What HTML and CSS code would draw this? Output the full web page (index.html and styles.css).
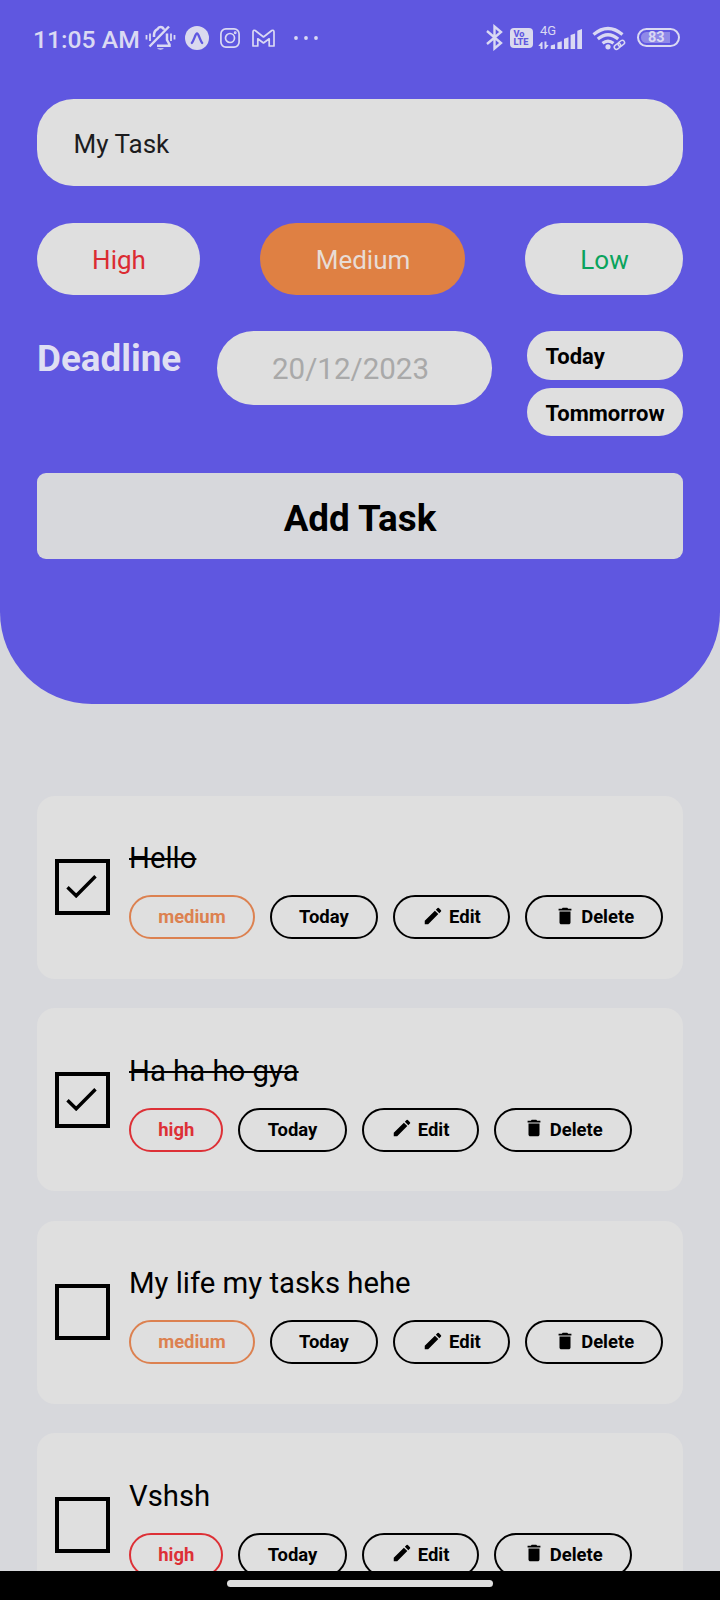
FILE: index.html
```html
<!DOCTYPE html>
<html lang="en">
<head>
<meta charset="utf-8">
<title>My Task</title>
<link rel="stylesheet" href="styles.css">
</head>
<body>
<svg class="sprite" aria-hidden="true">
  <symbol id="pencil" viewBox="0 0 24 24"><path d="M3 17.25V21h3.75L17.81 9.94l-3.75-3.75L3 17.25zM20.71 7.04a1 1 0 0 0 0-1.41l-2.34-2.34a1 1 0 0 0-1.41 0l-1.83 1.83 3.75 3.75 1.83-1.83z"/></symbol>
  <symbol id="trash" viewBox="0 0 24 24"><path d="M6 19c0 1.1.9 2 2 2h8c1.1 0 2-.9 2-2V7H6v12zM19 4h-3.5l-1-1h-5l-1 1H5v2h14V4z"/></symbol>
  <symbol id="check" viewBox="0 0 31 24"><path d="M1.5 13.2 10.2 21.8 29.5 2.3" fill="none" stroke="#000" stroke-width="3.4"/></symbol>
</svg>
<div class="screen">
  <header class="header">
    <div class="status">
      <span class="clock">11:05 AM</span>
      <svg class="i-bell" width="31" height="28" viewBox="0 0 31 28" fill="none" stroke="#dad9f3" stroke-width="2.5">
        <path d="M9 13v-2a6.500 6.500 0 0 1 3.500-5.800Q13.500 3 15.500 3Q18 3 19 5.600M22 9.500V16l2.500 4.500v1.200H12M4.500 22.500 24 2.500" />
        <path d="M12 24.300a4 2.700 0 0 0 7 0z" fill="#dad9f3" stroke="none"/>
        <path d="M5 9.500v7.500M1.500 11v4.500M26 9.500v7.500M29.500 11v4.500" stroke-width="1.800"/>
      </svg>
      <svg class="i-expo" width="24" height="24" viewBox="0 0 24 24"><circle cx="12" cy="12" r="12" fill="#dad9ee"/><path d="M6.800 17C9 14.500 10.300 7.500 12 7.500S15 14.500 17.200 17" fill="none" stroke="#5f57e0" stroke-width="2.300" stroke-linecap="round"/></svg>
      <svg class="i-insta" width="20" height="20" viewBox="0 0 20 20" fill="none" stroke="#dad9f3" stroke-width="1.700"><rect x=".9" y=".9" width="18.200" height="18.200" rx="5"/><circle cx="10" cy="10" r="4.500"/><circle cx="15.200" cy="4.800" r=".6"/></svg>
      <svg class="i-gmail" width="23" height="18" viewBox="0 0 23 18" fill="none" stroke="#dad9f3" stroke-width="1.700" stroke-linejoin="round"><path d="M1 17V3Q1 .6 3.200 1.500L11.500 8 19.800 1.500Q22 .6 22 3V17H17.200V9.800L11.500 14 5.800 9.800V17Z"/></svg>
      <svg class="i-dots" width="24" height="4" viewBox="0 0 24 4" fill="#dad9f3"><circle cx="2" cy="2" r="1.900"/><circle cx="12" cy="2" r="1.900"/><circle cx="22" cy="2" r="1.900"/></svg>

      <svg class="i-bt" width="17" height="27" viewBox="0 0 17 27" fill="none" stroke="#dad9f3" stroke-width="2.400"><path d="M1 7 15 19 8.500 24.500V2.500L15 8 1 20"/></svg>
      <span class="volte"><span>Vo</span><span>LTE</span></span>
      <span class="signal">
        <span class="net">4G</span>
        <svg width="46" height="23" viewBox="0 0 46 23" fill="#dad9f3"><path d="M4.500 15v7H2.500v-3H.3l3.300-4zM6.500 22v-7.500h2V18h2.200L7.500 22zM12.800 18.500l4.200-1.300V22h-4.200zM19.400 15.500l4.400-1.300V22h-4.400zM26 11.800l4.500-1.500V22H26zM32.600 8l4.500-1.500V22h-4.500zM39.300 3.800 44 2V22h-4.700z"/></svg>
      </span>
      <svg class="i-wifi" width="35" height="25" viewBox="0 0 35 25" fill="none" stroke="#dad9f3" stroke-width="3.200"><path d="M1.500 8.500Q16 -3.500 30.500 8.500M5.800 13Q16 4.500 26.200 13M10.500 17.300Q16 13 21.500 17.300"/><circle cx="16" cy="20.800" r="2.600" fill="#dad9f3" stroke="none"/><g stroke="#5f57e0" stroke-width="5"><path d="M24 22 31 16"/></g><g stroke-width="1.500"><rect x="-3.500" y="-2.200" width="7" height="4.400" rx="2.200" transform="translate(25.500 20.300) rotate(-38)"/><rect x="-3.500" y="-2.200" width="7" height="4.400" rx="2.200" transform="translate(29.300 17.300) rotate(-38)"/></g></svg>
      <span class="battery"><span>83</span></span>
    </div>

    <div class="field">My Task</div>
    <div class="priorities">
      <span class="prio prio-high">High</span>
      <span class="prio prio-medium">Medium</span>
      <span class="prio prio-low">Low</span>
    </div>
    <div class="deadline">
      <span class="deadline-label">Deadline</span>
      <span class="date">20/12/2023</span>
      <div class="quick"><span>Today</span><span>Tommorrow</span></div>
    </div>
    <div class="add">Add Task</div>
  </header>

  <main class="tasks">
    <article class="card">
      <span class="box"><svg width="31" height="24"><use href="#check"/></svg></span>
      <div class="body">
        <div class="title done">Hello</div>
        <div class="chips"><span class="chip medium">medium</span><span class="chip">Today</span><span class="chip"><svg width="22" height="22"><use href="#pencil"/></svg>Edit</span><span class="chip"><svg width="22" height="22"><use href="#trash"/></svg>Delete</span></div>
      </div>
    </article>
    <article class="card">
      <span class="box"><svg width="31" height="24"><use href="#check"/></svg></span>
      <div class="body">
        <div class="title done">Ha ha ho gya</div>
        <div class="chips"><span class="chip high">high</span><span class="chip">Today</span><span class="chip"><svg width="22" height="22"><use href="#pencil"/></svg>Edit</span><span class="chip"><svg width="22" height="22"><use href="#trash"/></svg>Delete</span></div>
      </div>
    </article>
    <article class="card">
      <span class="box"></span>
      <div class="body">
        <div class="title">My life my tasks hehe</div>
        <div class="chips"><span class="chip medium">medium</span><span class="chip">Today</span><span class="chip"><svg width="22" height="22"><use href="#pencil"/></svg>Edit</span><span class="chip"><svg width="22" height="22"><use href="#trash"/></svg>Delete</span></div>
      </div>
    </article>
    <article class="card">
      <span class="box"></span>
      <div class="body">
        <div class="title">Vshsh</div>
        <div class="chips"><span class="chip high">high</span><span class="chip">Today</span><span class="chip"><svg width="22" height="22"><use href="#pencil"/></svg>Edit</span><span class="chip"><svg width="22" height="22"><use href="#trash"/></svg>Delete</span></div>
      </div>
    </article>
  </main>
  <footer class="nav"><span class="handle"></span></footer>
</div>
</body>
</html>
```
FILE: styles.css
```css
* { box-sizing: border-box; }
html, body { margin: 0; }
body { font-family: Roboto, "Liberation Sans", sans-serif; color: #000; }
svg { display: block; flex: none; }
.sprite { position: absolute; width: 0; height: 0; }
.screen { width: 720px; height: 1600px; display: flex; flex-direction: column; overflow: hidden; background: #d7d8dc; }

.header { flex: none; height: 704px; padding: 0 37px; background: #5f57e0; border-radius: 0 0 92px 92px; }
.status { height: 99px; margin: 0 -37px; padding-left: 33px; display: flex; align-items: flex-start; color: #dad9f3; }
.clock { width: 108px; margin-top: 25px; font-size: 24.700px; line-height: 29px; font-weight: 500; white-space: nowrap; }
.i-bell { margin: 24px 0 0 4px; }
.i-expo { margin: 26px 0 0 9px; }
.i-insta { margin: 28px 0 0 11px; }
.i-gmail { margin: 29px 0 0 12px; }
.i-dots { margin: 36px 0 0 19px; }
.i-bt { margin: 24px 0 0 168px; }
.volte { width: 23px; height: 20px; margin: 28px 0 0 7px; padding: 2px 0 0 3.500px; border-radius: 4px; background: #dad9ee; color: #5f57e0; display: flex; flex-direction: column; font-size: 9.200px; line-height: 8px; font-weight: 800; }
.signal { position: relative; width: 46px; margin: 27px 0 0 5px; }
.net { position: absolute; left: 2px; top: -3px; font-size: 13px; line-height: 14px; }
.i-wifi { margin: 26px 0 0 8px; }
.battery { width: 43px; height: 19px; margin: 28px 0 0 10px; border: 2px solid #dad9f3; border-radius: 10px; padding: 2px; display: flex; }
.battery span { width: 35px; height: 11px; border-radius: 6px; padding-left: 7px; background: linear-gradient(90deg, #8f89e8 0 84%, transparent 84%); font-size: 14.500px; line-height: 12px; font-weight: 700; }

.field { height: 87px; padding-left: 36.500px; border-radius: 36.600px; background: #dfdfdf; color: #1c1c1e; font-size: 26px; line-height: 90px; }
.priorities { display: flex; justify-content: space-between; margin-top: 37px; }
.prio { height: 72px; border-radius: 36px; background: #dfdfdf; font-size: 26px; line-height: 75px; text-align: center; padding-left: 1px; }
.prio-high { width: 163px; color: #db2b32; }
.prio-medium { width: 205px; background: #df8043; color: #e8dcd5; }
.prio-low { width: 158px; color: #0aa35c; }
.deadline { display: flex; margin-top: 36px; height: 106px; }
.deadline-label { width: 180px; color: #dfdff3; font-size: 36.800px; line-height: 55px; font-weight: 700; }
.date { width: 275px; height: 74px; border-radius: 36.600px; background: #dfdfdf; color: #a9a9a9; font-size: 29.500px; line-height: 77px; text-align: center; padding-right: 8px; }
.quick { width: 156.500px; margin-left: 34.500px; display: flex; flex-direction: column; gap: 8px; }
.quick span { height: 48.500px; padding-left: 19px; border-radius: 24px; background: #dfdfdf; font-size: 22px; line-height: 51px; font-weight: 700; }
.add { height: 86px; margin-top: 36px; border-radius: 9px; background: #d7d8dc; font-size: 36.800px; line-height: 91px; font-weight: 700; text-align: center; }

.tasks { flex: 1; min-height: 0; overflow: hidden; padding: 91.500px 37px 0 36.500px; display: flex; flex-direction: column; gap: 29.600px; }
.card { flex: none; height: 183px; padding: 0 18.500px; display: flex; align-items: center; gap: 19px; border-radius: 18px; background: #dfdfdf; }
.box { flex: none; width: 55px; height: 56px; border: 4px solid #000; display: flex; align-items: center; justify-content: center; padding: 0 2px 2px 0; }
.body { padding-top: 3px; }
.title { width: max-content; font-size: 29.300px; line-height: 40px; }
.done { text-decoration: line-through; text-decoration-thickness: 2px; }
.chips { display: flex; gap: 15px; margin-top: 17px; }
.chip { height: 44px; padding: 0 27.200px; border: 2px solid #000; border-radius: 22px; display: flex; align-items: center; font-size: 18.450px; line-height: 22px; font-weight: 700; white-space: nowrap; }
.chip svg { margin-right: 5px; margin-top: -3px; }
.medium { color: #dc8150; border-color: #dc8150; }
.high { color: #dd3036; border-color: #dd3036; }
.nav { flex: none; height: 29.500px; background: #000; display: flex; justify-content: center; padding-top: 9.500px; }
.handle { width: 266px; height: 7px; border-radius: 4px; background: #dfdfdf; }
```
